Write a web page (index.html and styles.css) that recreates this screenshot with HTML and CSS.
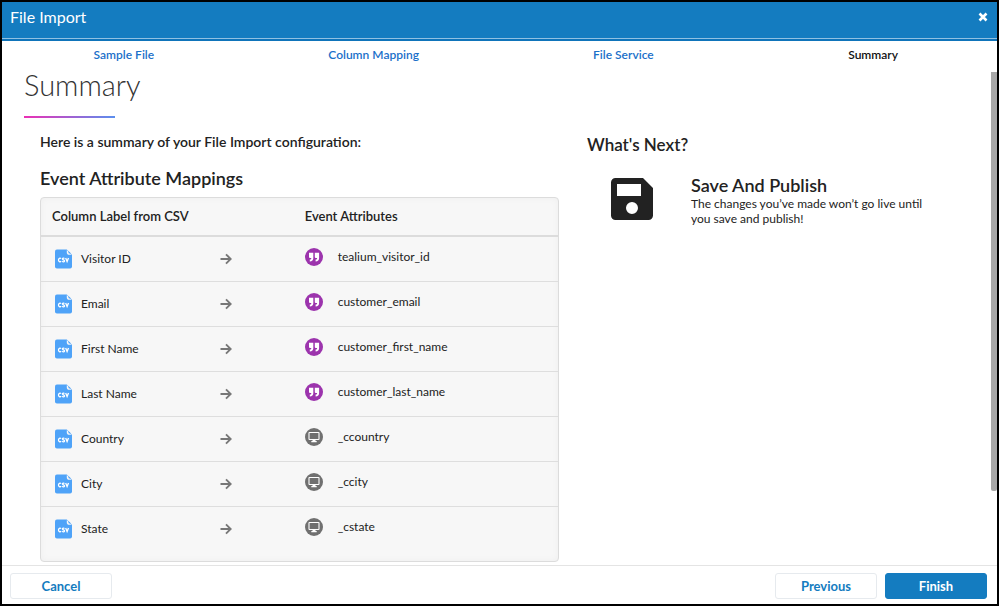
FILE: index.html
```html
<!DOCTYPE html>
<html lang="en">
<head>
<meta charset="utf-8">
<meta name="viewport" content="width=device-width, initial-scale=1">
<title>File Import</title>
<link rel="stylesheet" href="styles.css">
</head>
<body>
<svg class="sprite" aria-hidden="true">
  <symbol id="csv" viewBox="0 0 18 20">
    <path fill="#4fa3f8" d="M2 0H12.500L18 5.500V18a2 2 0 0 1-2 2H2a2 2 0 0 1-2-2V2a2 2 0 0 1 2-2z"/>
    <path fill="#f7f7f7" d="M12.500 0.500L17.500 5.500H15C13.500 5.500 12.500 4.500 12.500 3z"/>
    <path fill="#4fa3f8" d="M14.200 1.400L17 4.200H15.600C14.700 4.200 14.200 3.700 14.200 2.900z"/>
    <g fill="none" stroke="#fff" stroke-width="1.400">
      <path d="M6.500 9.600C5.300 8.500 3.700 9.300 3.700 11s1.600 2.500 2.800 1.400"/>
      <path d="M10 9.500C9.300 8.800 7.900 9 7.900 10s2.200.9 2.200 2-1.600 1.300-2.500.4"/>
      <path d="M11.300 8.900l1.500 3.800 1.500-3.800"/>
    </g>
  </symbol>
  <symbol id="arrow" viewBox="0 0 12 12">
    <path fill="none" stroke="#777" stroke-width="1.900" d="M0.500 6H10.500M6 1.300L10.700 6 6 10.700"/>
  </symbol>
  <symbol id="string" viewBox="0 0 18 18">
    <circle cx="9" cy="9" r="9" fill="#9c34ad"/>
    <path fill="#fff" d="M4 4.800h4.300v5.400c0 2-1.200 3.200-3.500 3.200v-1.900c1 0 1.500-.5 1.500-1.500H5a1 1 0 0 1-1-1zM9.800 4.800h4.300v5.400c0 2-1.200 3.200-3.500 3.200v-1.900c1 0 1.500-.5 1.500-1.500h-1.300a1 1 0 0 1-1-1z"/>
  </symbol>
  <symbol id="screen" viewBox="0 0 18 18">
    <circle cx="9" cy="9" r="9" fill="#707070"/>
    <rect x="4" y="4.500" width="10" height="7" rx="0.500" fill="none" stroke="#fff" stroke-width="1.100"/>
    <path fill="#fff" d="M7.500 12h3v1h1.200v1.200H6.300V13h1.200z"/>
  </symbol>
</svg>
<div class="dialog" role="dialog" aria-labelledby="dialog-title">
  <header class="header">
    <h1 class="header-title" id="dialog-title">File Import</h1>
    <button class="close" type="button" aria-label="Close">
      <svg width="10" height="10" viewBox="0 0 10 10"><path d="M1.500 1.500L8.500 8.500M8.500 1.500L1.500 8.500" stroke="#fff" stroke-width="2.600"/></svg>
    </button>
  </header>
  <nav class="steps" aria-label="Steps">
    <a class="step" href="#">Sample File</a>
    <a class="step" href="#">Column Mapping</a>
    <a class="step" href="#">File Service</a>
    <a class="step step-current" href="#" aria-current="step">Summary</a>
  </nav>
  <main class="body">
    <h2 class="page-title">Summary</h2>
    <div class="columns">
      <section>
        <p class="intro">Here is a summary of your File Import configuration:</p>
        <h3 class="section-title">Event Attribute Mappings</h3>
        <div class="panel">
          <table class="mappings">
            <colgroup>
              <col>
              <col class="col-arrow">
              <col class="col-attr">
            </colgroup>
            <thead>
              <tr><th colspan="2">Column Label from CSV</th><th class="head-attr">Event Attributes</th></tr>
            </thead>
            <tbody>
              <tr><td><span class="source"><svg class="csv"><use href="#csv"/></svg>Visitor ID</span></td><td><svg class="arrow"><use href="#arrow"/></svg></td><td><span class="target"><svg class="type"><use href="#string"/></svg>tealium_visitor_id</span></td></tr>
              <tr><td><span class="source"><svg class="csv"><use href="#csv"/></svg>Email</span></td><td><svg class="arrow"><use href="#arrow"/></svg></td><td><span class="target"><svg class="type"><use href="#string"/></svg>customer_email</span></td></tr>
              <tr><td><span class="source"><svg class="csv"><use href="#csv"/></svg>First Name</span></td><td><svg class="arrow"><use href="#arrow"/></svg></td><td><span class="target"><svg class="type"><use href="#string"/></svg>customer_first_name</span></td></tr>
              <tr><td><span class="source"><svg class="csv"><use href="#csv"/></svg>Last Name</span></td><td><svg class="arrow"><use href="#arrow"/></svg></td><td><span class="target"><svg class="type"><use href="#string"/></svg>customer_last_name</span></td></tr>
              <tr><td><span class="source"><svg class="csv"><use href="#csv"/></svg>Country</span></td><td><svg class="arrow"><use href="#arrow"/></svg></td><td><span class="target"><svg class="type"><use href="#screen"/></svg>_ccountry</span></td></tr>
              <tr><td><span class="source"><svg class="csv"><use href="#csv"/></svg>City</span></td><td><svg class="arrow"><use href="#arrow"/></svg></td><td><span class="target"><svg class="type"><use href="#screen"/></svg>_ccity</span></td></tr>
              <tr><td><span class="source"><svg class="csv"><use href="#csv"/></svg>State</span></td><td><svg class="arrow"><use href="#arrow"/></svg></td><td><span class="target"><svg class="type"><use href="#screen"/></svg>_cstate</span></td></tr>
            </tbody>
          </table>
        </div>
      </section>
      <section>
        <h3 class="next-title">What's Next?</h3>
        <div class="action">
          <svg class="save" viewBox="0 0 42 42" aria-hidden="true">
            <path fill="#222" fill-rule="evenodd" d="M4.500 0H32L42 10V37.500a4.500 4.500 0 0 1-4.500 4.500H4.500A4.500 4.500 0 0 1 0 37.500V4.500A4.500 4.500 0 0 1 4.500 0zM6 6V18H30V6zM21 24a6 6 0 1 0 0 12 6 6 0 0 0 0-12z"/>
          </svg>
          <div>
            <h4 class="section-title">Save And Publish</h4>
            <p>The changes you’ve made won’t go live until you save and publish!</p>
          </div>
        </div>
      </section>
    </div>
    <div class="scrollbar" aria-hidden="true"></div>
  </main>
  <footer class="footer">
    <button class="button" type="button">Cancel</button>
    <button class="button button-previous" type="button">Previous</button>
    <button class="button button-primary" type="button">Finish</button>
  </footer>
</div>
</body>
</html>
```
FILE: styles.css
```css
* {
  box-sizing: border-box;
}

body {
  margin: 0;
  font-family: Lato, "Open Sans", sans-serif;
  font-size: 12px;
  line-height: 15px;
  color: #222;
}

h1, h2, h3, h4, p {
  margin: 0;
}

.sprite {
  position: absolute;
  width: 0;
  height: 0;
}

.dialog {
  display: flex;
  flex-direction: column;
  min-height: 100vh;
  border: 2px solid #000;
  background: #fff;
}

.header {
  display: flex;
  align-items: center;
  justify-content: space-between;
  flex: none;
  height: 39px;
  padding: 0 8px 9px;
  background: linear-gradient(to top, #0f74ba 2px, #8fc1e2 2px, #8fc1e2 3px, #147cc0 3px);
}

.header-title {
  font-size: 16px;
  line-height: 20px;
  font-weight: 400;
  color: #fff;
}

.close {
  display: flex;
  padding: 1px;
  border: 0;
  background: none;
}

.steps {
  display: grid;
  grid-template-columns: repeat(4, 1fr);
  flex: none;
  margin: 0 -1px 0 -3px;
  padding: 6px 0 10px;
}

.step {
  text-align: center;
  font-weight: 600;
  color: #1a6fc9;
  text-decoration: none;
}

.step-current {
  color: #111;
}

.body {
  position: relative;
  flex: 1;
  padding: 0 64px 0 22px;
}

.page-title {
  padding-bottom: 20px;
  font-size: 29px;
  line-height: 26px;
  font-weight: 300;
  color: #333;
  background: linear-gradient(to right, #ec2fb4, #5a8fee) left bottom / 91px 2px no-repeat;
}

.columns {
  display: grid;
  grid-template-columns: 3fr 2fr;
  gap: 28px;
  padding: 16px 0 0 16px;
}

.intro {
  margin-bottom: 17px;
  font-size: 14px;
  line-height: 16px;
  font-weight: 600;
}

.section-title {
  font-size: 18px;
  line-height: 22px;
  font-weight: 600;
}

.next-title {
  font-size: 17px;
  line-height: 22px;
  font-weight: 600;
}

.panel {
  margin-top: 8px;
  padding-bottom: 10px;
  border: 1px solid #dcdcdc;
  border-radius: 4px;
  background: #f7f7f7;
  box-shadow: inset 0 0 6px #eee;
}

.mappings {
  width: 100%;
  table-layout: fixed;
  border-collapse: collapse;
}

.mappings th {
  height: 38px;
  padding: 0 0 0 11px;
  border-bottom: 2px solid #dcdcdc;
  font-size: 13px;
  text-align: left;
  font-weight: 600;
}

.mappings .head-attr {
  padding-left: 0;
}

.mappings td {
  height: 45px;
  padding: 0;
  border-top: 1px solid #dedede;
}

.col-arrow {
  width: 85px;
}

.col-attr {
  width: 49%;
}

.source,
.target {
  display: flex;
  align-items: center;
}

.source {
  gap: 9px;
  padding-left: 14px;
}

.target {
  gap: 15px;
  padding-bottom: 4px;
}

.csv {
  width: 17px;
  height: 20px;
}

.arrow {
  display: block;
  width: 12px;
  height: 12px;
}

.type {
  width: 18px;
  height: 18px;
}

.action {
  display: flex;
  gap: 38px;
  padding: 18px 0 0 24px;
}

.save {
  flex: none;
  width: 42px;
  height: 42px;
  margin-top: 4px;
}

.scrollbar {
  position: absolute;
  top: 0;
  right: 0;
  width: 6px;
  height: 85%;
  border-radius: 0 0 2px 2px;
  background: #a8a8a8;
}

.footer {
  display: flex;
  gap: 8px;
  flex: none;
  padding: 7px 10px 5px 8px;
  border-top: 1px solid #e4e4e4;
}

.button {
  width: 102px;
  height: 26px;
  padding: 0;
  border: 1px solid #e6eaee;
  border-radius: 3px;
  background: #fff;
  font-family: inherit;
  font-size: 13px;
  font-weight: 700;
  color: #147cc0;
}

.button-previous {
  margin-left: auto;
}

.button-primary {
  border-color: #147cc0;
  background: #147cc0;
  color: #fff;
}
```
